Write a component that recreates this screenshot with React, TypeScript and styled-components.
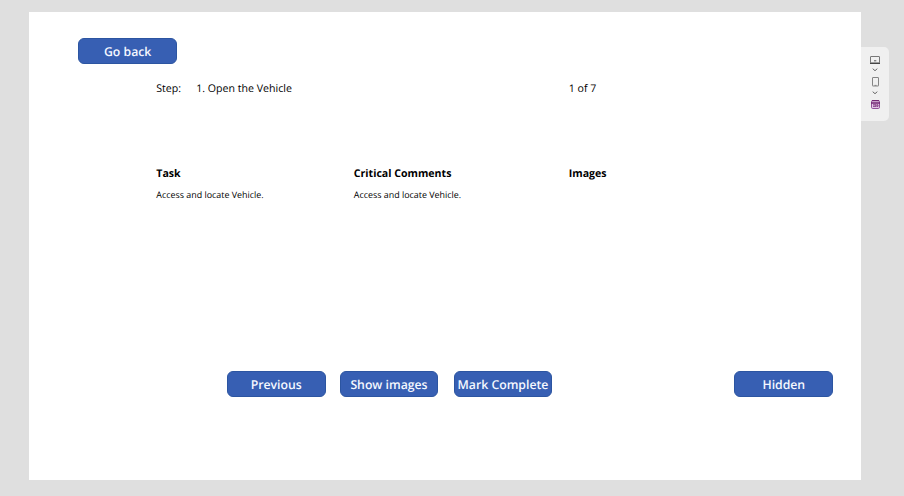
import React from "react";
import styled, { createGlobalStyle } from "styled-components";

const GlobalStyle = createGlobalStyle`
  * { box-sizing: border-box; }
  body { margin: 0; background: #dfdfdf; font-family: "Open Sans", sans-serif; text-rendering: geometricPrecision; }
`;

const Workspace = styled.div`
  display: flex;
  align-items: flex-start;
  width: 904px;
  height: 496px;
  padding: 12px 0 0 28.7px;
  overflow: hidden;
  background: #dfdfdf;
`;

const Screen = styled.main`
  flex: none;
  display: flex;
  flex-direction: column;
  width: 832.5px;
  height: 468px;
  padding: 26.3px 28px 0 49.6px;
  background: #fff;
  color: #000;
`;

const ActionButton = styled.button`
  flex: none;
  display: flex;
  align-items: center;
  justify-content: center;
  width: 98.8px;
  height: 26px;
  padding: 1px 0 0;
  border: 1px solid #2c55a1;
  border-radius: 6px;
  background: #375fb3;
  color: #f5f8ff;
  font: 600 12.25px/18px "Open Sans", sans-serif;
  text-rendering: geometricPrecision;
  white-space: nowrap;
`;

const StepBar = styled.header`
  display: grid;
  grid-template-columns: 40px 372.5px 1fr;
  margin: 15.7px 0 0 78px;
  font-size: 10.6px;
  line-height: 18px;
`;

const Columns = styled.section`
  display: grid;
  grid-template-columns: 197.5px 215px 1fr;
  height: 206.3px;
  margin: 67px 0 0 78px;
`;

const Heading = styled.h2`
  margin: 0;
  font-size: 10.6px;
  font-weight: 700;
  line-height: 18px;
`;

const Detail = styled.p`
  margin: 5px 0 0;
  font-size: 8.92px;
  line-height: 13px;
`;

const Footer = styled.footer`
  display: flex;
  justify-content: space-between;
  padding-left: 148.5px;
`;

const ButtonGroup = styled.div<{ $gap: number }>`
  display: flex;
  gap: ${(p) => p.$gap}px;
`;

const DeviceRail = styled.aside`
  display: flex;
  flex-direction: column;
  align-items: center;
  width: 28px;
  height: 74px;
  margin-top: 35px;
  padding-top: 9px;
  border-radius: 0 5px 5px 0;
  background: #f0f0f0;
`;

const Icon = styled.svg<{ $top?: number }>`
  flex: none;
  display: block;
  margin-top: ${(p) => p.$top ?? 0}px;
  fill: none;
`;

const Chevron = () => (
  <Icon width="6" height="4" viewBox="0 0 6 4" $top={4}>
    <path d="M.7.7 3 2.7 5.3.7" stroke="#666" strokeWidth="1" />
  </Icon>
);

const columns = [
  { title: "Task", detail: "Access and locate Vehicle." },
  { title: "Critical Comments", detail: "Access and locate Vehicle." },
  { title: "Images", detail: "" },
];

export default function App() {
  return (
    <>
      <GlobalStyle />
      <Workspace>
        <Screen>
          <ActionButton>Go back</ActionButton>
          <StepBar>
            <span>Step:</span>
            <span>1. Open the Vehicle</span>
            <span>1 of 7</span>
          </StepBar>
          <Columns>
            {columns.map((c) => (
              <div key={c.title}>
                <Heading>{c.title}</Heading>
                {c.detail && <Detail>{c.detail}</Detail>}
              </div>
            ))}
          </Columns>
          <Footer>
            <ButtonGroup $gap={14}>
              <ActionButton>Previous</ActionButton>
              <ButtonGroup $gap={15.2}>
                <ActionButton>Show images</ActionButton>
                <ActionButton>Mark Complete</ActionButton>
              </ButtonGroup>
            </ButtonGroup>
            <ActionButton>Hidden</ActionButton>
          </Footer>
        </Screen>
        <DeviceRail>
          <Icon width="10" height="8" viewBox="0 0 10 8">
            <rect x=".5" y=".5" width="9" height="6.5" rx=".3" stroke="#777" />
            <path d="M0 7.4h10" stroke="#444" strokeWidth="1.2" />
            <path d="M4 4.8h2.3" stroke="#555" />
          </Icon>
          <Chevron />
          <Icon width="7" height="10" viewBox="0 0 7 10" $top={5}>
            <rect x=".5" y=".5" width="6" height="8.5" rx=".3" stroke="#858585" />
            <path d="M2.5 8.4h2" stroke="#777" strokeWidth=".8" />
          </Icon>
          <Chevron />
          <Icon width="9" height="9" viewBox="0 0 9 9" $top={5}>
            <rect x=".5" y=".5" width="8" height="8" rx="1.2" fill="#e3c7e6" stroke="#93509a" />
            <path d="M1 .6h7M0 3h9" stroke="#742774" strokeWidth="1.3" />
            <path d="M2 4.8h3v1.5H2M5.5 4.8H7v1.5H5.5" stroke="#742774" strokeWidth=".9" />
          </Icon>
        </DeviceRail>
      </Workspace>
    </>
  );
}
